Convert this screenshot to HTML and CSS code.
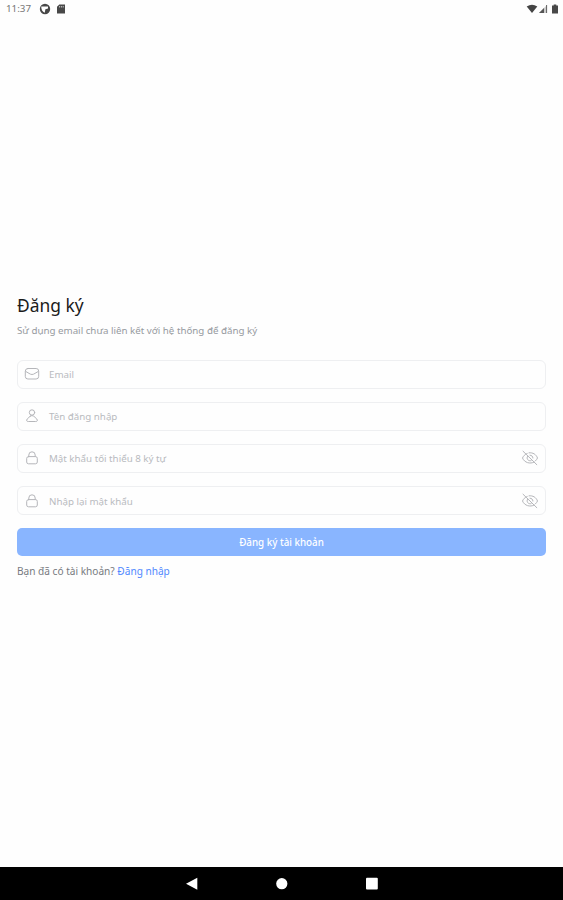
FILE: index.html
```html
<!DOCTYPE html>
<html lang="vi">
<head>
<meta charset="utf-8">
<title>Đăng ký</title>
<link rel="stylesheet" href="styles.css">
</head>
<body>
<svg class="defs" aria-hidden="true">
  <symbol id="lock" viewBox="0 0 16 16"><rect x="2.700" y="6.600" width="10.600" height="7.200" rx="1.800"/><path d="M4.800 6.600V5a3.200 3.200 0 0 1 6.400 0v1.600"/></symbol>
  <symbol id="eye-off" viewBox="0 0 18 18"><path d="M2 2.200 15.800 15.700M6.200 4.500C3.800 5.300 2.200 7.300 1.500 9c2 4.700 7.500 6.300 11.600 4.100M8 3.800c4-.5 7.200 1.700 8.500 5.200-.5 1.100-1.200 2.100-2.100 2.900M6.600 7.200c-1.600 2.400.5 5.300 3.500 4.500M9 6.200c1.700 0 2.900 1.200 2.900 2.800"/></symbol>
</svg>
<div class="screen">
  <header class="status">
    <span class="clock">11:37</span>
    <svg class="status-app" viewBox="0 0 12 12"><circle cx="6" cy="6" r="5.200" fill="#484848"/><path d="M2.200 3.500h6.800v2L6.400 6.200 5.700 9.800C3.500 8.800 2.200 6.500 2.200 3.500Z" fill="#fff"/></svg>
    <svg class="status-card" viewBox="0 0 10 10"><path d="M3.300.5H9v9H1V2.800Z" fill="#484848"/><path d="M3.600 2v1.500M5.400 2v1.500M7.200 2v1.500" stroke="#ddd" stroke-width=".8"/></svg>
    <svg class="status-wifi" viewBox="0 0 12 10"><path d="M.7 2.600Q6-1.200 11.300 2.600L6 9Z" fill="#444"/></svg>
    <svg class="status-signal" viewBox="0 0 10 10"><path d="M9 1v8H1Z" fill="#ccc"/><path d="M6 4v5H1Z" fill="#555"/><path d="M8.600 1v8" stroke="#555" stroke-width=".9"/></svg>
    <svg class="status-battery" viewBox="0 0 8 10"><path d="M2.700.5h2.600v1H7v8H1v-8h1.700Z" fill="#484848"/></svg>
  </header>
  <main class="content">
    <h1 class="title">Đăng ký</h1>
    <p class="subtitle">Sử dụng email chưa liên kết với hệ thống để đăng ký</p>
    <form class="form">
      <div class="field">
        <svg class="icon" viewBox="0 0 16 16"><rect x="1.300" y="2.500" width="13.400" height="10.500" rx="2.600"/><path d="m1.800 5.500 4.500 2.600q1.700.8 3.400 0l4.500-2.600"/></svg>
        <span class="hint">Email</span>
      </div>
      <div class="field">
        <svg class="icon" viewBox="0 0 16 16"><circle cx="8" cy="4.500" r="2.700"/><path d="M6.200 8.200 3.200 11Q1.700 13.500 4.300 13.500h7.400Q14.300 13.500 12.800 11L9.800 8.200Q8 6.800 6.200 8.200Z"/></svg>
        <span class="hint">Tên đăng nhập</span>
      </div>
      <div class="field">
        <svg class="icon"><use href="#lock"/></svg>
        <span class="hint">Mật khẩu tối thiểu 8 ký tự</span>
        <svg class="eye"><use href="#eye-off"/></svg>
      </div>
      <div class="field">
        <svg class="icon"><use href="#lock"/></svg>
        <span class="hint">Nhập lại mật khẩu</span>
        <svg class="eye"><use href="#eye-off"/></svg>
      </div>
      <button class="submit" type="button">Đăng ký tài khoản</button>
    </form>
    <p class="login">Bạn đã có tài khoản? <a class="login-link">Đăng nhập</a></p>
  </main>
  <nav class="navbar">
    <svg viewBox="0 0 14 14"><path d="M1 6.700 12.300.7v12Z"/></svg>
    <svg viewBox="0 0 14 14"><circle cx="6.800" cy="6.700" r="5.600"/></svg>
    <svg viewBox="0 0 14 14"><rect x="1" y=".8" width="11.800" height="11.800" rx="1"/></svg>
  </nav>
</div>
</body>
</html>
```
FILE: styles.css
```css
* { box-sizing: border-box; }
body {
  margin: 0;
  background: #fefefe;
  font-family: "Noto Sans", sans-serif;
  font-size: 9.8px;
}
svg { display: block; flex: none; }
.defs { position: absolute; width: 0; height: 0; }
.screen { height: 900px; display: flex; flex-direction: column; }

.status { height: 18px; padding: 0 4px 0 6px; display: flex; align-items: center; }
.clock { width: 33px; color: #777; font-size: 9.8px; line-height: 18px; }
.status-app { width: 12px; height: 12px; }
.status-card { width: 10px; height: 10px; margin-left: 5px; }
.status-wifi { width: 12px; height: 10px; margin-left: auto; }
.status-signal { width: 10px; height: 10px; }
.status-battery { width: 8px; height: 10px; margin-left: 3px; }

.content { flex: 1; padding: 274px 17px 0; }
.title { margin: 0; color: #1b1b1b; font-size: 17.4px; font-weight: 400; line-height: 26px; }
.subtitle { margin: 6px 0 0; color: #969a9f; font-size: 9.75px; line-height: 14px; white-space: nowrap; }
.form { margin: 21.5px 0 0; display: flex; flex-direction: column; gap: 13.2px; }
.field {
  height: 29px;
  padding: 0 6px;
  display: flex;
  align-items: center;
  border: 1px solid #eeeff1;
  border-radius: 6px;
}
.icon { width: 16px; height: 16px; }
.icon, .eye { fill: none; stroke: #b5b6ba; stroke-width: 1; stroke-linecap: round; stroke-linejoin: round; }
.eye { width: 18px; height: 18px; margin-left: auto; }
.hint { padding-top: 2px; margin-left: 9px; color: #b9bbbf; font-size: 9.75px; line-height: 14px; white-space: nowrap; }
.submit {
  height: 28px;
  padding: 1px 0 0;
  border: 0;
  border-radius: 5px;
  background: #89b5ff;
  color: #fff;
  font: 500 9.8px/14px "Noto Sans", sans-serif;
}
.login { margin: 8px 0 0; color: #777a7e; font-size: 10.1px; line-height: 14px; }
.login-link { color: #5088ff; }

.navbar { height: 33px; display: flex; justify-content: center; align-items: center; gap: 76px; background: #000; }
.navbar svg { width: 14px; height: 14px; fill: #fff; }
```
